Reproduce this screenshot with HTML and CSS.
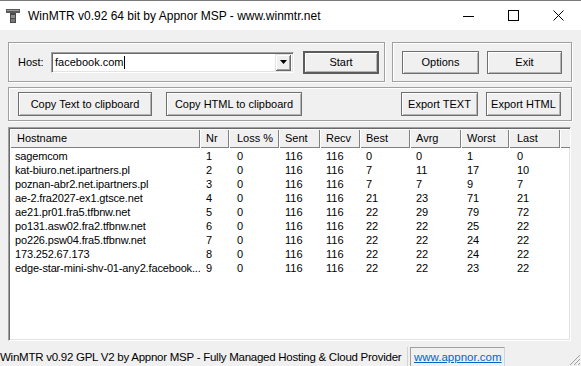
FILE: index.html
```html
<!DOCTYPE html>
<html lang="en">
<head>
    <meta charset="UTF-8">
    <meta name="viewport" content="width=device-width, initial-scale=1.0">
    <title>WinMTR</title>
    <link rel="stylesheet" href="styles.css">
</head>
<body>
    <div class="window">
        <div class="titlebar">
            <svg class="app-icon" width="16" height="16" viewBox="0 0 16 16">
                <rect x="1" y="1" width="14" height="4" fill="#5a5a5a"/>
                <rect x="2" y="2" width="12" height="1" fill="#9a9a9a"/>
                <rect x="5" y="5" width="6" height="10" fill="#4a4a4a"/>
                <rect x="6" y="7" width="4" height="3" fill="#8c8c8c"/>
                <rect x="6" y="11" width="4" height="3" fill="#777"/>
            </svg>
            <span class="title">WinMTR v0.92 64 bit by Appnor MSP - www.winmtr.net</span>
            <div class="caption-buttons">
                <span class="cap-btn">
                    <svg width="12" height="12" viewBox="0 0 12 12"><rect x="0" y="6" width="11" height="1" fill="#000"/></svg>
                </span>
                <span class="cap-btn">
                    <svg width="12" height="12" viewBox="0 0 12 12"><rect x="0.5" y="0.5" width="10" height="10" fill="none" stroke="#000"/></svg>
                </span>
                <span class="cap-btn">
                    <svg width="12" height="12" viewBox="0 0 12 12"><path d="M0.5 0.5 L10.5 10.5 M10.5 0.5 L0.5 10.5" stroke="#000" stroke-width="1"/></svg>
                </span>
            </div>
        </div>

        <div class="client">
            <div class="row-top">
                <div class="group group-host">
                    <span class="host-label">Host:</span>
                    <div class="combo">
                        <span class="combo-text">facebook.com<span class="caret"></span></span>
                        <span class="combo-drop">
                            <svg width="7" height="4" viewBox="0 0 7 4"><path d="M0 0 H7 L3.5 4 Z" fill="#000"/></svg>
                        </span>
                    </div>
                    <button class="btn btn-default btn-start">Start</button>
                </div>
                <div class="group group-opts">
                    <button class="btn btn-options">Options</button>
                    <button class="btn btn-exit">Exit</button>
                </div>
            </div>

            <div class="group group-export">
                <button class="btn btn-copy-text">Copy Text to clipboard</button>
                <button class="btn btn-copy-html">Copy HTML to clipboard</button>
                <span class="spacer"></span>
                <button class="btn btn-options">Export TEXT</button>
                <button class="btn btn-exit">Export HTML</button>
            </div>

            <div class="listview">
                <div class="lv-row lv-header">
                    <div class="lv-head">Hostname</div>
                    <div class="lv-head">Nr</div>
                    <div class="lv-head">Loss %</div>
                    <div class="lv-head">Sent</div>
                    <div class="lv-head">Recv</div>
                    <div class="lv-head">Best</div>
                    <div class="lv-head">Avrg</div>
                    <div class="lv-head">Worst</div>
                    <div class="lv-head">Last</div>
                    <div class="lv-head"></div>
                </div>
                <div id="lvBody" class="lv-body"></div>
            </div>
        </div>

        <div class="statusbar">
            <div class="status-main">WinMTR v0.92 GPL V2 by Appnor MSP - Fully Managed Hosting &amp; Cloud Provider</div>
            <div class="status-link"><a href="#">www.appnor.com</a></div>
            <div class="size-grip">
                <svg width="12" height="12" viewBox="0 0 12 12">
                    <path d="M11 1 L1 11 M11 5 L5 11 M11 9 L9 11" stroke="#a0a0a0" stroke-width="1"/>
                </svg>
            </div>
        </div>
    </div>

    <script>
        const hops = [
            ['sagemcom', 1, 0, 116, 116, 0, 0, 1, 0],
            ['kat-biuro.net.ipartners.pl', 2, 0, 116, 116, 7, 11, 17, 10],
            ['poznan-abr2.net.ipartners.pl', 3, 0, 116, 116, 7, 7, 9, 7],
            ['ae-2.fra2027-ex1.gtsce.net', 4, 0, 116, 116, 21, 23, 71, 21],
            ['ae21.pr01.fra5.tfbnw.net', 5, 0, 116, 116, 22, 29, 79, 72],
            ['po131.asw02.fra2.tfbnw.net', 6, 0, 116, 116, 22, 22, 25, 22],
            ['po226.psw04.fra5.tfbnw.net', 7, 0, 116, 116, 22, 22, 24, 22],
            ['173.252.67.173', 8, 0, 116, 116, 22, 22, 24, 22],
            ['edge-star-mini-shv-01-any2.facebook...', 9, 0, 116, 116, 22, 22, 23, 22]
        ];

        const body = document.getElementById('lvBody');
        hops.forEach(hop => {
            const row = document.createElement('div');
            row.className = 'lv-row';
            row.innerHTML = hop.map(v => `<div class="lv-cell">${v}</div>`).join('') + '<div class="lv-cell"></div>';
            body.appendChild(row);
        });
    </script>
</body>
</html>
```

FILE: styles.css
```css
body {
    margin: 0;
    font-family: "Liberation Sans", Arial, sans-serif;
    font-size: 11px;
    color: #000;
    background: #f0f0f0;
}
.window {
    width: 581px;
    height: 366px;
    display: flex;
    flex-direction: column;
    background: #f0f0f0;
    overflow: hidden;
}

/* title bar */
.titlebar {
    height: 29px;
    border-top: 1px solid #7a7a7a;
    background: #fff;
    display: flex;
    align-items: center;
    padding-left: 5px;
}
.app-icon {
    margin-right: 7px;
    margin-top: 1px;
}
.title {
    font-family: "Liberation Sans", Arial, sans-serif;
    font-size: 12px;
    color: #000;
    flex: 1;
}
.caption-buttons {
    display: flex;
    height: 29px;
}
.cap-btn {
    width: 45px;
    display: flex;
    align-items: center;
    justify-content: center;
}

/* client area */
.client {
    flex: 1;
    display: flex;
    flex-direction: column;
    padding: 12px 9px 0 8px;
}
.row-top {
    display: flex;
    gap: 7px;
}
.group {
    box-sizing: border-box;
    border: 1px solid #a0a0a0;
    box-shadow: inset 1px 1px 0 #fff, 1px 1px 0 #fff;
    display: flex;
    align-items: center;
}
.group-host {
    width: 377px;
    height: 40px;
    padding-left: 9px;
}
.group-opts {
    width: 180px;
    height: 40px;
    padding-left: 9px;
    gap: 8px;
}
.group-export {
    margin-top: 5px;
    height: 34px;
    padding: 0 10px 0 9px;
    gap: 14px;
}
.group-export .btn-exit {
    margin-left: -6px;
}
.spacer {
    flex: 1;
}
.host-label {
    width: 33px;
}

/* combo box */
.combo {
    box-sizing: border-box;
    width: 243px;
    height: 21px;
    background: #fff;
    border: 1px solid;
    border-color: #a0a0a0 #fff #fff #a0a0a0;
    box-shadow: inset 1px 1px 0 #696969, inset -1px -1px 0 #e3e3e3;
    display: flex;
    align-items: center;
    padding: 0 2px 0 3px;
}
.combo-text {
    flex: 1;
    display: flex;
    align-items: center;
}
.caret {
    display: inline-block;
    width: 1px;
    height: 13px;
    background: #000;
    margin-left: 1px;
}
.combo-drop {
    box-sizing: border-box;
    width: 16px;
    height: 17px;
    background: #f0f0f0;
    box-shadow: inset 1px 1px 0 #e3e3e3, inset -1px -1px 0 #696969, inset 2px 2px 0 #fff, inset -2px -2px 0 #a0a0a0;
    display: flex;
    align-items: center;
    justify-content: center;
}

/* buttons */
.btn {
    box-sizing: border-box;
    height: 23px;
    font-family: "Liberation Sans", Arial, sans-serif;
    font-size: 11px;
    color: #000;
    background: #f0f0f0;
    border: 1px solid #6f6f6f;
    box-shadow: inset 1px 1px 0 #fff, inset -1px -1px 0 #b4b4b4;
    padding: 0;
}
.btn-default {
    border: 2px solid #5c5c5c;
}
.btn-start {
    width: 76px;
    margin-left: 9px;
}
.btn-options {
    width: 77px;
}
.btn-exit {
    width: 75px;
}
.btn-copy-text {
    width: 134px;
    height: 24px;
}
.btn-copy-html {
    width: 136px;
    height: 24px;
}
.group-export .btn-options,
.group-export .btn-exit {
    height: 24px;
}

/* list view */
.listview {
    box-sizing: border-box;
    margin-top: 6px;
    width: 563px;
    height: 214px;
    background: #fff;
    border: 1px solid;
    border-color: #a0a0a0 #fff #fff #a0a0a0;
    box-shadow: inset 1px 1px 0 #696969, inset -1px -1px 0 #e3e3e3;
    padding: 1px 0 0 1px;
    overflow: hidden;
}
.lv-row {
    display: grid;
    grid-template-columns: 190px 29px 50px 41px 40px 50px 51px 48px 51px 11px;
}
.lv-header {
    height: 19px;
}
.lv-head {
    background: #f0f0f0;
    box-shadow: inset 1px 1px 0 #fff, inset -1px -1px 0 #808080;
    padding-left: 6px;
    line-height: 19px;
    white-space: nowrap;
    overflow: hidden;
}
.lv-head:first-child {
    padding-left: 7px;
}
.lv-head:nth-child(3),
.lv-head:nth-child(9) {
    padding-left: 8px;
}
.lv-body .lv-row {
    height: 14px;
    line-height: 14px;
}
.lv-cell {
    padding-left: 6px;
    white-space: nowrap;
    overflow: hidden;
}
.lv-cell:first-child {
    padding-left: 5px;
    letter-spacing: -0.15px;
}
.lv-cell:nth-child(3),
.lv-cell:nth-child(9) {
    padding-left: 8px;
}
.lv-body {
    padding-top: 1px;
}

/* status bar */
.statusbar {
    height: 19px;
    display: flex;
    font-family: "Liberation Sans", Arial, sans-serif;
    font-size: 11.5px;
    margin-top: 6px;
}
.status-main {
    width: 408px;
    box-sizing: border-box;
    border-right: 1px solid #d4d4d4;
    line-height: 20px;
    letter-spacing: -0.25px;
    white-space: nowrap;
    overflow: hidden;
}
.status-link {
    width: 95px;
    margin-left: 2px;
    box-sizing: border-box;
    border-top: 1px solid #a0a0a0;
    border-left: 1px solid #a0a0a0;
    border-right: 1px solid #d4d4d4;
    padding-left: 3px;
    line-height: 19px;
}
.status-link a {
    color: #0066cc;
}
.size-grip {
    flex: 1;
    display: flex;
    align-items: flex-end;
    justify-content: flex-end;
}
```
